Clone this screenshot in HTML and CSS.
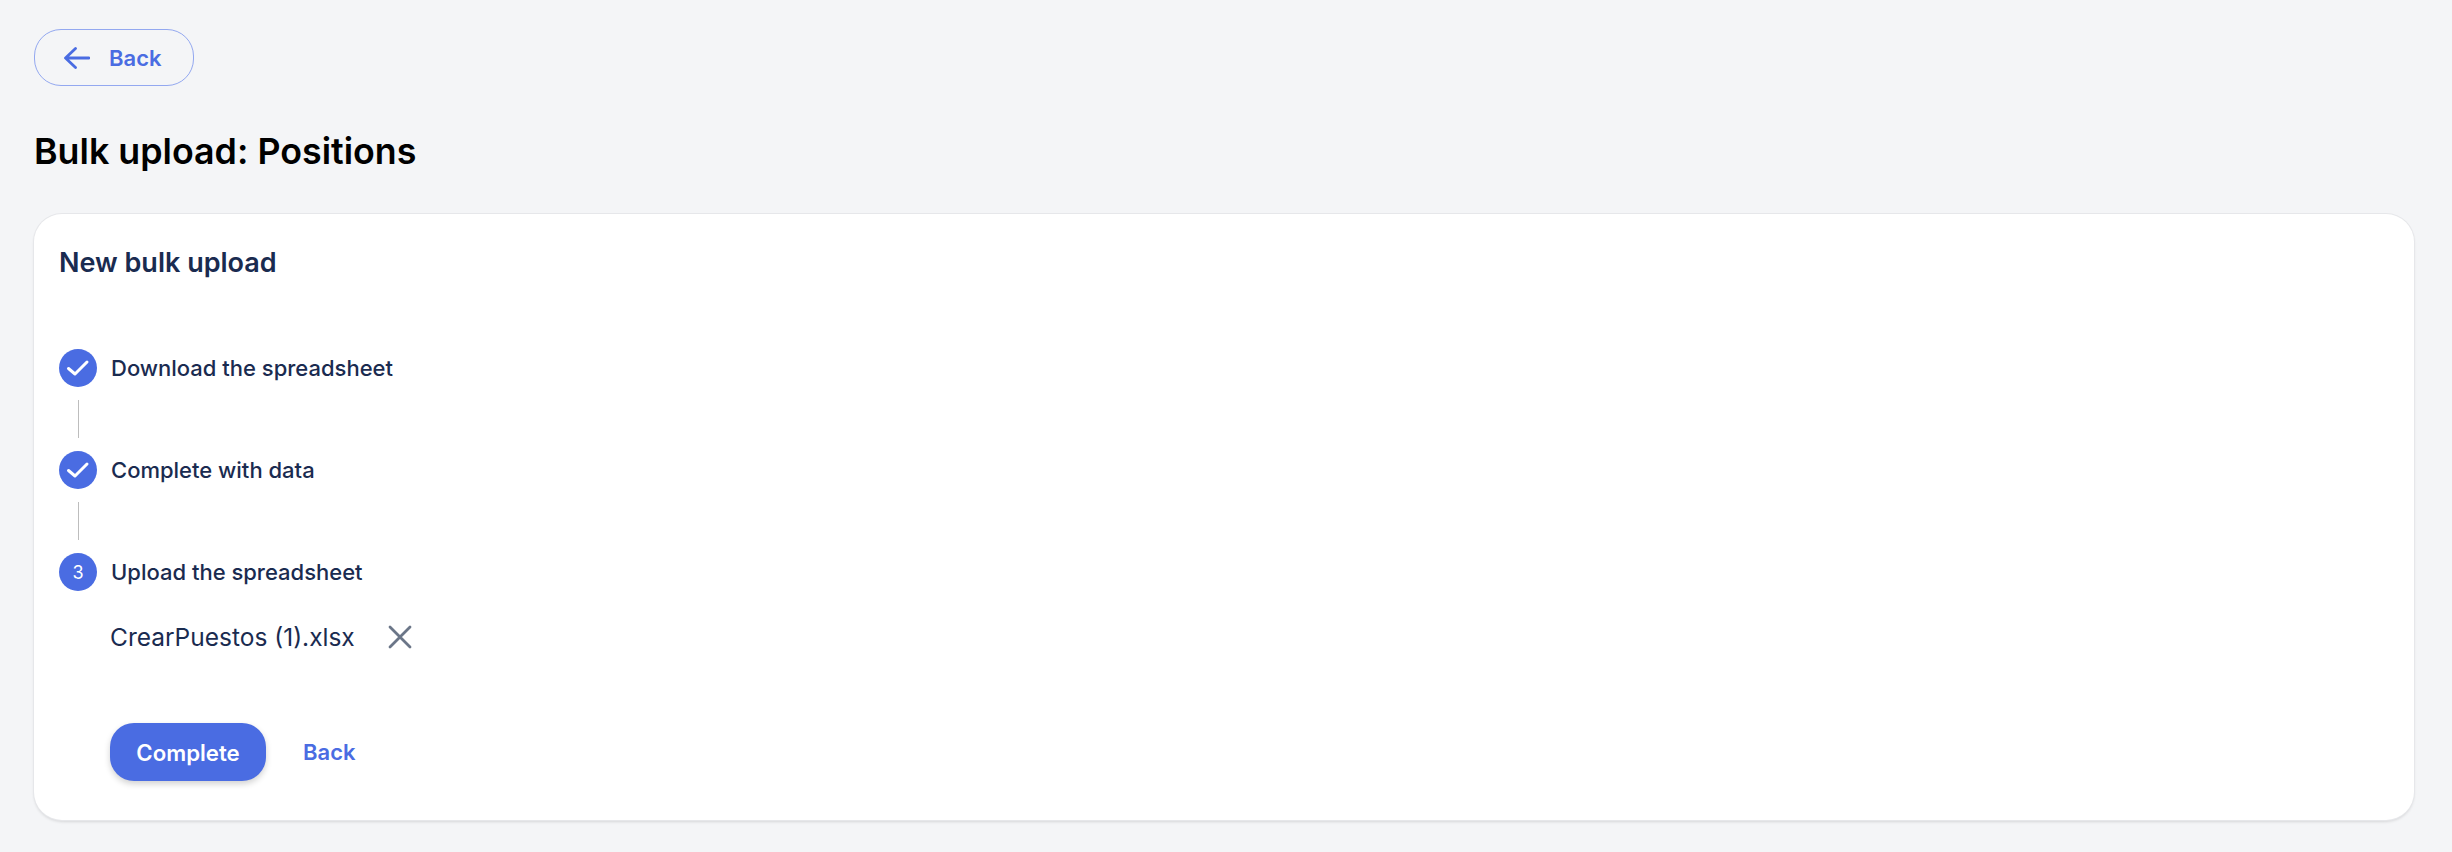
FILE: index.html
```html
<!DOCTYPE html>
<html lang="en">
<head>
  <meta charset="UTF-8">
  <title>Bulk upload: Positions</title>
  <link rel="stylesheet" href="styles.css">
</head>
<body>
  <a class="back-button" href="#">
    <svg class="back-icon" viewBox="0 0 26 22" width="26" height="22" fill="none">
      <path d="M11.5 1.5 L1.5 11 L11.5 20.5 M2 11 H25" stroke="#4a6ce2" stroke-width="2.8" stroke-linecap="round" stroke-linejoin="round"/>
    </svg>
    <span>Back</span>
  </a>

  <h1 class="page-title">Bulk upload: Positions</h1>

  <!-- Card with the steps -->
  <section class="card">
    <h2 class="card-title">New bulk upload</h2>

    <div class="steps">
      <div class="step">
        <div class="step-circle">
          <svg viewBox="0 0 24 24" width="24" height="24" fill="none">
            <path d="M2.5 12.5 L9 18 L21 6" stroke="#fff" stroke-width="3" stroke-linecap="round" stroke-linejoin="round"/>
          </svg>
        </div>
        <div class="step-label">Download the spreadsheet</div>
      </div>
      <div class="step-line"></div>
      <div class="step">
        <div class="step-circle">
          <svg viewBox="0 0 24 24" width="24" height="24" fill="none">
            <path d="M2.5 12.5 L9 18 L21 6" stroke="#fff" stroke-width="3" stroke-linecap="round" stroke-linejoin="round"/>
          </svg>
        </div>
        <div class="step-label">Complete with data</div>
      </div>
      <div class="step-line"></div>
      <div class="step">
        <div class="step-circle">3</div>
        <div class="step-label">Upload the spreadsheet</div>
      </div>
    </div>

    <div class="file-row">
      <span class="file-name">CrearPuestos (1).xlsx</span>
      <svg class="file-remove" viewBox="0 0 24 24" width="24" height="24" fill="none">
        <path d="M2 2 L22 22 M22 2 L2 22" stroke="#6b7688" stroke-width="2.8" stroke-linecap="round"/>
      </svg>
    </div>

    <div class="actions">
      <button class="btn-primary" type="button">Complete</button>
      <a class="btn-link" href="#">Back</a>
    </div>
  </section>
</body>
</html>
```

FILE: styles.css
```css
* {
  box-sizing: border-box;
}

body {
  margin: 0;
  padding: 29px 38px 0 34px;
  min-height: 100vh;
  background: #f4f5f7;
  font-family: Inter, "Liberation Sans", sans-serif;
  color: #1a2b50;
}

/* Top back button */
.back-button {
  display: flex;
  align-items: center;
  gap: 19px;
  width: 160px;
  height: 57px;
  padding-left: 29px;
  border: 1px solid #93a8f0;
  border-radius: 27px;
  color: #4a6ce2;
  font-size: 22px;
  font-weight: 600;
  text-decoration: none;
}

.page-title {
  margin: 43px 0 0;
  font-size: 35.8px;
  line-height: 44px;
  font-weight: 600;
  color: #000;
}

/* Card */
.card {
  margin-top: 41px;
  height: 606px;
  padding: 31px 25px 0;
  background: #fff;
  border-radius: 28px;
  box-shadow: 0 0 0 1px #e6e7ea, 0 2px 3px rgba(0, 0, 0, 0.12);
}

.card-title {
  margin: 0;
  font-size: 27px;
  line-height: 36px;
  font-weight: 600;
}

/* Steps */
.steps {
  margin-top: 68px;
}

.step {
  display: flex;
  align-items: center;
  gap: 14px;
  height: 38px;
}

.step-circle {
  display: flex;
  align-items: center;
  justify-content: center;
  width: 38px;
  height: 38px;
  border-radius: 50%;
  background: #4a6ce2;
  color: #fff;
  font-size: 18px;
}

.step-label {
  padding-bottom: 1px;
  font-size: 22px;
  font-weight: 500;
}

.step-line {
  width: 1px;
  height: 38px;
  margin: 13px 0 13px 19px;
  background: #bdbdbd;
}

/* Uploaded file */
.file-row {
  display: flex;
  align-items: center;
  gap: 33px;
  margin: 27px 0 0 51px;
  height: 38px;
}

.file-name {
  font-size: 24.5px;
}

/* Buttons */
.actions {
  display: flex;
  align-items: center;
  gap: 37px;
  margin: 67px 0 0 51px;
}

.btn-primary {
  width: 156px;
  height: 58px;
  border: 0;
  border-radius: 24px;
  background: #4a6ce2;
  color: #fff;
  font-family: inherit;
  font-size: 22.2px;
  font-weight: 600;
  box-shadow: 0 3px 6px rgba(0, 0, 0, 0.18);
}

.btn-link {
  color: #4a6ce2;
  font-size: 22px;
  font-weight: 600;
  text-decoration: none;
}
```
